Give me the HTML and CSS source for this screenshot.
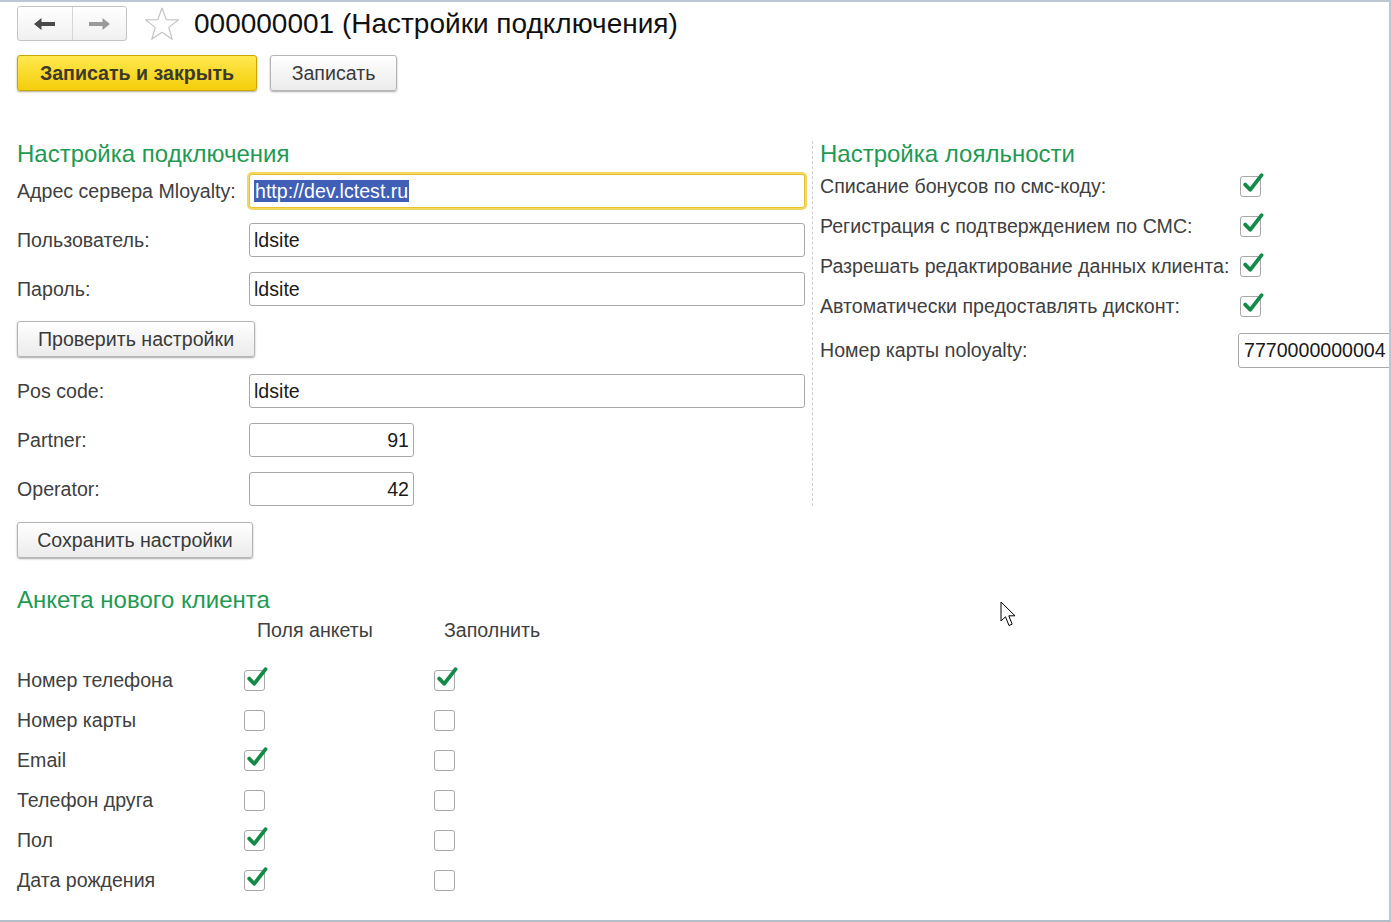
FILE: index.html
```html
<!DOCTYPE html>
<html lang="ru">
<head>
<meta charset="utf-8">
<title>000000001 (Настройки подключения)</title>
<link rel="stylesheet" href="styles.css">
</head>
<body>
<div class="window">
  <header class="titlebar">
    <div class="nav">
      <button class="nav-btn" aria-label="Назад">
        <svg width="22" height="12" viewBox="0 0 22 12"><path d="M0 6 L7.5 0 L7.5 4 L21 4 L21 8 L7.5 8 L7.5 12 Z" fill="#4a4a4a"/></svg>
      </button>
      <button class="nav-btn" aria-label="Вперёд">
        <svg width="22" height="12" viewBox="0 0 22 12"><path d="M22 6 L14.5 0 L14.5 4 L1 4 L1 8 L14.5 8 L14.5 12 Z" fill="#9a9a9a"/></svg>
      </button>
    </div>
    <svg class="star" width="36" height="34" viewBox="0 0 36 34"><polygon points="18,1 22.2,12.6 34.5,12.9 24.8,20.4 28.2,32.3 18,25.3 7.8,32.3 11.2,20.4 1.5,12.9 13.8,12.6" fill="none" stroke="#c2c2c2" stroke-width="1.2" stroke-linejoin="round"/></svg>
    <h1 class="title">000000001 (Настройки подключения)</h1>
  </header>

  <div class="commandbar">
    <button class="btn btn-primary w-save-close">Записать и закрыть</button>
    <button class="btn w-save">Записать</button>
  </div>

  <div class="columns">
    <section class="col-left">
      <h2 class="group-title">Настройка подключения</h2>
      <div class="form">
        <div class="row">
          <span class="label">Адрес сервера Mloyalty:</span>
          <div class="input wide focused"><span class="sel">http://dev.lctest.ru</span></div>
        </div>
        <div class="row">
          <span class="label">Пользователь:</span>
          <div class="input wide">ldsite</div>
        </div>
        <div class="row">
          <span class="label">Пароль:</span>
          <div class="input wide">ldsite</div>
        </div>
        <div class="btn-row">
          <button class="btn w-check">Проверить настройки</button>
        </div>
        <div class="row">
          <span class="label">Pos code:</span>
          <div class="input wide">ldsite</div>
        </div>
        <div class="row">
          <span class="label">Partner:</span>
          <div class="input num">91</div>
        </div>
        <div class="row">
          <span class="label">Operator:</span>
          <div class="input num">42</div>
        </div>
      </div>
    </section>
    <div class="divider"></div>
    <section class="col-right">
      <h2 class="group-title">Настройка лояльности</h2>
      <div class="loyalty">
        <div class="lrow"><span class="label">Списание бонусов по смс-коду:</span><span class="cb checked"></span></div>
        <div class="lrow"><span class="label">Регистрация с подтверждением по СМС:</span><span class="cb checked"></span></div>
        <div class="lrow"><span class="label">Разрешать редактирование данных клиента:</span><span class="cb checked"></span></div>
        <div class="lrow"><span class="label">Автоматически предоставлять дисконт:</span><span class="cb checked"></span></div>
        <div class="lrow card-row"><span class="label">Номер карты noloyalty:</span><div class="input card">7770000000004</div></div>
      </div>
    </section>
  </div>

  <div class="save-row">
    <button class="btn w-store">Сохранить настройки</button>
  </div>

  <section class="survey">
    <h2 class="group-title">Анкета нового клиента</h2>
    <div class="survey-head">
      <span></span>
      <span class="colhead h1c">Поля анкеты</span>
      <span class="colhead h2c">Заполнить</span>
    </div>
    <div class="survey-grid">
      <span class="label">Номер телефона</span>
      <span class="cell"><span class="cb checked"></span></span>
      <span class="cell"><span class="cb checked"></span></span>

      <span class="label">Номер карты</span>
      <span class="cell"><span class="cb"></span></span>
      <span class="cell"><span class="cb"></span></span>

      <span class="label">Email</span>
      <span class="cell"><span class="cb checked"></span></span>
      <span class="cell"><span class="cb"></span></span>

      <span class="label">Телефон друга</span>
      <span class="cell"><span class="cb"></span></span>
      <span class="cell"><span class="cb"></span></span>

      <span class="label">Пол</span>
      <span class="cell"><span class="cb checked"></span></span>
      <span class="cell"><span class="cb"></span></span>

      <span class="label">Дата рождения</span>
      <span class="cell"><span class="cb checked"></span></span>
      <span class="cell"><span class="cb"></span></span>
    </div>
  </section>

  <svg class="cursor" width="20" height="28" viewBox="0 0 20 28"><path d="M1 1 L1 20 L5.5 15.8 L9 24.5 L12.2 23.2 L8.8 14.8 L15 14.8 Z" fill="#fff" stroke="#000" stroke-width="1" stroke-linejoin="miter"/></svg>
</div>
</body>
</html>
```

FILE: styles.css
```css
* { box-sizing: border-box; }

body {
  margin: 0;
  background: #fff;
  font-family: "Liberation Sans", Arial, sans-serif;
  font-size: 19.6px;
  color: #404040;
}

.window {
  position: relative;
  width: 1391px;
  height: 922px;
  overflow: hidden;
  border-top: 2px solid #bcc7d3;
  border-right: 2px solid #bcc7d3;
  border-bottom: 2px solid #b3bfcc;
  background: #fff;
}

/* title bar */
.titlebar {
  display: flex;
  align-items: center;
  padding: 4px 0 0 17px;
  height: 39px;
}

.nav {
  display: flex;
  flex: none;
  width: 110px;
  height: 35px;
  border: 1px solid #c4c4c4;
  border-radius: 3px;
  background: linear-gradient(#ffffff, #f0f0f0);
  overflow: hidden;
}

.nav-btn {
  flex: 1;
  display: flex;
  align-items: center;
  justify-content: center;
  border: 0;
  background: transparent;
  padding: 0;
}

.nav-btn + .nav-btn { border-left: 1px solid #d6d6d6; }

.star { margin-left: 17px; flex: none; }

.title {
  margin: 0 0 0 14px;
  font-size: 28px;
  font-weight: normal;
  color: #111;
  line-height: 32px;
  white-space: nowrap;
}

/* command bar */
.commandbar {
  display: flex;
  gap: 13px;
  padding-left: 17px;
  margin-top: 14px;
}

.btn {
  height: 36px;
  padding: 0;
  border: 1px solid #b5b5b5;
  border-radius: 3px;
  background: linear-gradient(#ffffff, #ebebeb);
  box-shadow: 0 1px 2px rgba(0, 0, 0, 0.35);
  font-family: inherit;
  font-size: 19.6px;
  color: #3a3a3a;
}

.btn-primary {
  background: linear-gradient(#ffe94f, #f4cd0b);
  border-color: #c9a600;
  font-weight: bold;
  color: #3d3a28;
  box-shadow: 0 1px 2px rgba(80, 60, 0, 0.45);
}

.w-save-close { width: 240px; }
.w-save { width: 127px; }
.w-check { width: 238px; }
.w-store { width: 236px; }

/* columns */
.columns {
  display: flex;
  margin-top: 50px;
  padding-left: 17px;
}

.col-left { flex: none; width: 790px; }

.divider {
  flex: none;
  margin-left: 5px;
  border-left: 1px dashed #cfcfcf;
}

.col-right {
  padding-left: 7px;
  flex: 1;
  min-width: 0;
}

.group-title {
  margin: 0;
  height: 25px;
  font-size: 24px;
  line-height: 25px;
  font-weight: normal;
  color: #1f9a52;
  white-space: nowrap;
}

.form {
  display: flex;
  flex-direction: column;
  gap: 15px;
  margin-top: 8px;
}

.row {
  display: grid;
  grid-template-columns: 232px auto;
  align-items: center;
  height: 34px;
}

.label { white-space: nowrap; color: #404040; }

.input {
  height: 34px;
  border: 1px solid #a9a9a9;
  border-radius: 3px;
  padding: 0 4px;
  display: flex;
  align-items: center;
  color: #1a1a1a;
  background: #fff;
  white-space: nowrap;
}

.input.wide { width: 556px; }

.input.num {
  width: 165px;
  justify-content: flex-end;
}

.input.focused {
  border: 1px solid #e6c232;
  box-shadow: 0 0 0 2px #f2d862;
}

.sel {
  background: #3f60b6;
  color: #fff;
  line-height: 22px;
  padding: 0 1px;
}

.btn-row { margin-bottom: 2px; }

/* loyalty */
.loyalty { display: flex; flex-direction: column; }

.lrow {
  display: grid;
  grid-template-columns: 418px auto;
  align-items: center;
  height: 40px;
}

.lrow .cb { margin-left: 2px; }

.card-row {
  margin-top: 7px;
  height: 35px;
}

.input.card {
  width: 200px;
  height: 35px;
  padding-left: 5px;
}

.save-row {
  padding-left: 17px;
  margin-top: 16px;
}

/* checkbox */
.cb {
  position: relative;
  display: inline-block;
  width: 21px;
  height: 21px;
  border: 1px solid #a8a8a8;
  border-radius: 3px;
  background: #fff;
}

.cb.checked::after {
  content: "";
  position: absolute;
  left: 2px;
  top: -4px;
  width: 21px;
  height: 21px;
  background: url("data:image/svg+xml;utf8,<svg xmlns='http://www.w3.org/2000/svg' width='21' height='21' viewBox='0 0 21 21'><path d='M2.2 11.6 L7.2 16.8 L18.6 2.2' fill='none' stroke='%23138a48' stroke-width='3.8' stroke-linecap='round' stroke-linejoin='round'/></svg>") no-repeat;
}

/* survey */
.survey {
  padding-left: 17px;
  margin-top: 29px;
}

.survey-head,
.survey-grid {
  display: grid;
  grid-template-columns: 227px 190px 190px;
  align-items: center;
}

.survey-head { height: 36px; }

.survey-grid {
  grid-auto-rows: 40px;
  margin-top: 12px;
}

.colhead { color: #404040; white-space: nowrap; }
.h1c { padding-left: 13px; }
.h2c { padding-left: 10px; }

.cell { display: flex; align-items: center; }

.cursor {
  position: absolute;
  left: 1000px;
  top: 599px;
}
```
